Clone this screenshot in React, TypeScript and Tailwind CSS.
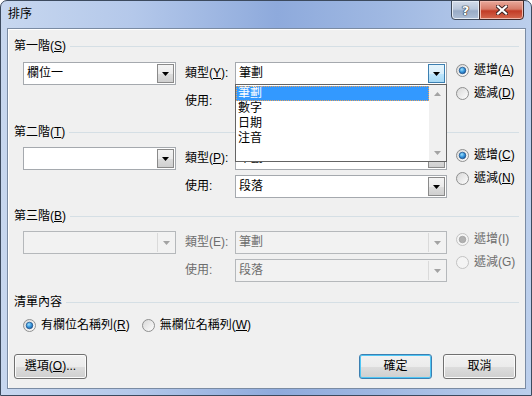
import type { ReactNode } from "react";

function Arrow({ dim, up }: { dim?: boolean; up?: boolean }) {
  return (
    <svg width="7" height="4" viewBox="0 0 7 4" className="shrink-0">
      <path d={up ? "M0 4h7L3.5 0z" : "M0 0h7L3.5 4z"} fill={dim ? "#a3a3a3" : "#000"} />
    </svg>
  );
}

function Radio({ checked, disabled }: { checked?: boolean; disabled?: boolean }) {
  return (
    <svg width="13" height="13" viewBox="0 0 13 13" className="shrink-0">
      <circle
        cx="6.5"
        cy="6.5"
        r="6"
        fill={disabled ? "#f4f4f4" : "url(#radioFill)"}
        stroke={disabled ? "#c2c2c2" : "#8e8f8f"}
      />
      {checked && (
        <circle
          cx="6.5"
          cy="6.5"
          r="3.3"
          fill={disabled ? "#b0b0b0" : "url(#radioDot)"}
          stroke={disabled ? "#9c9c9c" : "#1b4f86"}
          strokeWidth="0.7"
        />
      )}
    </svg>
  );
}

function RadioRow(props: { checked?: boolean; disabled?: boolean; children: ReactNode }) {
  return (
    <div className={`flex h-[23px] items-center gap-[5px] ${props.disabled ? "text-[#6d6d6d]" : ""}`}>
      <Radio checked={props.checked} disabled={props.disabled} />
      <span>{props.children}</span>
    </div>
  );
}

function Combo(props: {
  value?: string;
  wide?: boolean;
  disabled?: boolean;
  active?: boolean;
  children?: ReactNode;
}) {
  const { value, wide, disabled, active } = props;
  return (
    <div
      className={`relative flex h-[23px] shrink-0 border ${wide ? "w-[212px]" : "w-[153px]"} ${
        disabled ? "border-[#b5b8bb] bg-[#f2f2f2] text-[#6d6d6d]" : "border-[#a5a9ae] bg-white"
      }`}
    >
      <div className="flex flex-1 items-center pl-[3px]">{value}</div>
      {disabled ? (
        <div className="my-px mr-px flex w-[17px] items-center justify-center border-l border-[#dadada]">
          <Arrow dim />
        </div>
      ) : (
        <div
          className={`my-px mr-px flex w-[17px] items-center justify-center border ${
            active
              ? "border-[#3c7fb1] bg-[linear-gradient(#e5f4fc_0%,#d9effb_50%,#bee6fd_51%,#a7d9f5_100%)]"
              : "border-[#8a8a8a] bg-[linear-gradient(#f4f4f4_0%,#ebebeb_50%,#dddddd_51%,#cfcfcf_100%)]"
          }`}
        >
          <Arrow />
        </div>
      )}
      {props.children}
    </div>
  );
}

function GroupHeader({ children }: { children: ReactNode }) {
  return (
    <div className="flex h-[16px] items-center px-[6px]">
      <span>{children}</span>
      <div className="ml-[4px] h-px flex-1 bg-[#d5dfe5]" />
    </div>
  );
}

function Button({ children, primary }: { children: ReactNode; primary?: boolean }) {
  return (
    <div
      className={`flex h-[25px] w-[73px] items-center justify-center rounded-[3px] border bg-[linear-gradient(#f2f2f2_0%,#ebebeb_50%,#dddddd_51%,#cfcfcf_100%)] ${
        primary
          ? "border-[#3c7fb1] shadow-[inset_0_0_0_1px_#4fc6f5]"
          : "border-[#707070] shadow-[inset_0_0_0_1px_#fbfbfb]"
      }`}
    >
      {children}
    </div>
  );
}

function DropList() {
  const items = ["筆劃", "數字", "日期", "注音"];
  return (
    <div className="absolute left-[-1px] top-[21px] z-10 flex h-[78px] w-[212px] border border-[#646464] bg-white">
      <div className="flex-1 pt-px">
        {items.map((item, i) => (
          <div
            key={item}
            className={`flex h-[15px] items-center pl-[2px] ${
              i === 0 ? "bg-[#3399ff] text-white outline-1 -outline-offset-1 outline-dotted outline-[#e8a25a]" : ""
            }`}
          >
            {item}
          </div>
        ))}
      </div>
      <div className="flex w-[17px] flex-col justify-between bg-[#f0f0f0]">
        <div className="flex h-[17px] items-center justify-center">
          <Arrow dim up />
        </div>
        <div className="flex h-[17px] items-center justify-center">
          <Arrow dim />
        </div>
      </div>
    </div>
  );
}

function SortLevel(props: {
  field: string;
  typeLabel: ReactNode;
  up: ReactNode;
  down: ReactNode;
  disabled?: boolean;
  open?: boolean;
}) {
  const { disabled } = props;
  return (
    <div className="flex items-start pl-[15px]">
      <Combo value={props.field} disabled={disabled} />
      <div className={`ml-[9px] flex w-[50px] flex-col gap-[5px] ${disabled ? "text-[#6d6d6d]" : ""}`}>
        <div className="flex h-[23px] items-center">{props.typeLabel}</div>
        <div className="flex h-[23px] items-center">使用:</div>
      </div>
      <div className="flex flex-col gap-[5px]">
        <Combo value="筆劃" wide disabled={disabled} active={props.open}>
          {props.open && <DropList />}
        </Combo>
        <Combo value="段落" wide disabled={disabled} />
      </div>
      <div className="-mt-[3px] ml-[9px] flex flex-col">
        <RadioRow checked disabled={disabled}>
          {props.up}
        </RadioRow>
        <RadioRow disabled={disabled}>{props.down}</RadioRow>
      </div>
    </div>
  );
}

export default function App() {
  return (
    <div className="h-[396px] w-[532px] bg-white font-['Liberation_Sans','Noto_Sans_CJK_TC',sans-serif] text-[12px] leading-[15px] text-black">
      <svg width="0" height="0" className="absolute">
        <defs>
          <linearGradient id="radioFill" x1="0" y1="0" x2="1" y2="1">
            <stop offset="0" stopColor="#d6d6d6" />
            <stop offset="1" stopColor="#ffffff" />
          </linearGradient>
          <radialGradient id="radioDot" cx="0.4" cy="0.35" r="0.7">
            <stop offset="0" stopColor="#9ee0fb" />
            <stop offset="0.5" stopColor="#3d9be0" />
            <stop offset="1" stopColor="#145499" />
          </radialGradient>
        </defs>
      </svg>
      <div className="flex h-full flex-col rounded-t-[7px] border border-[#3c4a5e] bg-[linear-gradient(90deg,#c7d7ef_0%,#b4c8ea_25%,#8eaadc_52%,#9fb8e2_72%,#bccfec_100%)]">
        <div className="flex h-[27px] items-start">
          <div className="mt-[6px] pl-[7px]">排序</div>
          <div className="ml-auto mr-[7px] flex -mt-px">
            <div className="flex h-[20px] w-[29px] items-center justify-center rounded-bl-[4px] border border-[#3f4b5c] bg-[linear-gradient(#d3dcea_0%,#b8c6da_45%,#98abc6_55%,#aebfd6_100%)] shadow-[inset_0_0_0_1px_#e5ecf5]">
              <span className="font-['DejaVu_Sans',sans-serif] text-[13px] font-bold leading-none text-white [text-shadow:0_0_1px_#222,0_0_1px_#222,0_0_1px_#222]">
                ?
              </span>
            </div>
            <div className="-ml-px flex h-[20px] w-[45px] items-center justify-center rounded-br-[4px] border border-[#3f2b2b] bg-[linear-gradient(#e9a99b_0%,#d67b68_45%,#c23b26_55%,#d4694f_100%)] shadow-[inset_0_0_0_1px_#f0b8ac]">
              <svg width="12" height="10" viewBox="0 0 12 10">
                <path d="M2 1.5L10 8.5M10 1.5L2 8.5" stroke="#3a2222" strokeWidth="4" strokeLinecap="square" />
                <path d="M2 1.5L10 8.5M10 1.5L2 8.5" stroke="#ffffff" strokeWidth="2.2" strokeLinecap="square" />
              </svg>
            </div>
          </div>
        </div>
        <div className="mb-[6px] ml-[6px] mr-[5px] flex flex-1 flex-col border border-[#7a8ba3] bg-[#f0f0f0] shadow-[inset_1px_1px_0_#ffffff]">
          <div className="mt-[9px]">
            <GroupHeader>
              第一階(<u>S</u>)
            </GroupHeader>
          </div>
          <div className="mt-[8px]">
            <SortLevel
              field="欄位一"
              open
              typeLabel={
                <>
                  類型(<u>Y</u>):
                </>
              }
              up={
                <>
                  遞增(<u>A</u>)
                </>
              }
              down={
                <>
                  遞減(<u>D</u>)
                </>
              }
            />
          </div>
          <div className="mt-[11px]">
            <GroupHeader>
              第二階(<u>T</u>)
            </GroupHeader>
          </div>
          <div className="mt-[7px]">
            <SortLevel
              field=""
              typeLabel={
                <>
                  類型(<u>P</u>):
                </>
              }
              up={
                <>
                  遞增(<u>C</u>)
                </>
              }
              down={
                <>
                  遞減(<u>N</u>)
                </>
              }
            />
          </div>
          <div className="mt-[10px]">
            <GroupHeader>
              第三階(<u>B</u>)
            </GroupHeader>
          </div>
          <div className="mt-[7px]">
            <SortLevel field="" disabled typeLabel="類型(E):" up="遞增(I)" down="遞減(G)" />
          </div>
          <div className="mt-[12px]">
            <GroupHeader>清單內容</GroupHeader>
          </div>
          <div className="mt-[8px] flex h-[15px] items-center pl-[15px]">
            <Radio checked />
            <span className="ml-[5px]">
              有欄位名稱列(<u>R</u>)
            </span>
            <span className="ml-[12px]">
              <Radio />
            </span>
            <span className="ml-[5px]">
              無欄位名稱列(<u>W</u>)
            </span>
          </div>
          <div className="mt-[21px] flex pl-[6px] pr-[9px]">
            <Button>
              選項(<u>O</u>)...
            </Button>
            <div className="ml-auto flex gap-[11px]">
              <Button primary>確定</Button>
              <Button>取消</Button>
            </div>
          </div>
        </div>
      </div>
    </div>
  );
}
